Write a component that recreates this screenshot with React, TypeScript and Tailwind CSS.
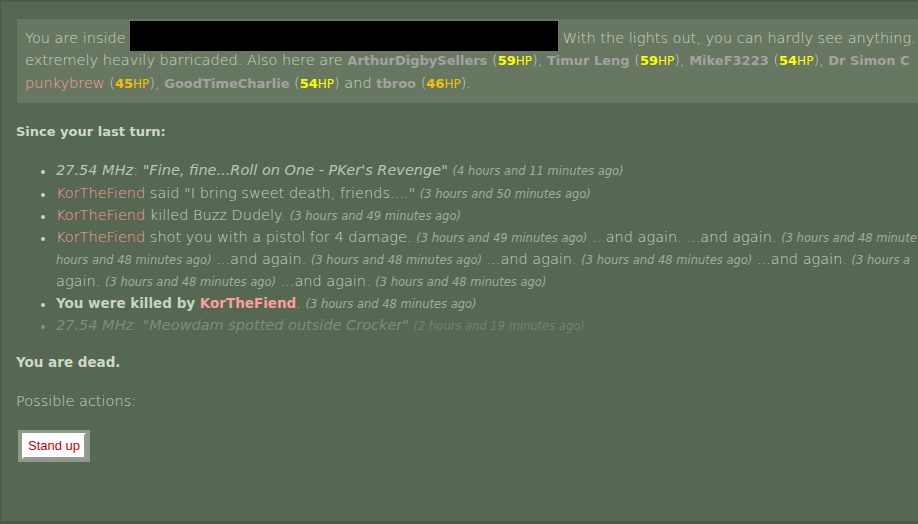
import React from 'react';

const Hp = ({ n, orange }: { n: number; orange?: boolean }) => (
  <span className={orange ? 'text-[#f2c200]' : 'text-[#ffff00]'}>
    <span className="font-bold text-[13px]">{n}</span>
    <span className="text-[12px] leading-none font-normal">HP</span>
  </span>
);

const Name = ({ children }: { children: React.ReactNode }) => (
  <span className="font-bold text-[13px] text-[#a3a3a0]">{children}</span>
);

const Fiend = ({ bold }: { bold?: boolean }) => (
  <span className={`text-[#ff9c9c] ${bold ? 'font-bold' : ''}`}>KorTheFiend</span>
);

const Ago = ({ children }: { children: React.ReactNode }) => (
  <span className="italic font-normal text-[11.5px] leading-none text-[#a2ac9c]">{children}</span>
);

const Em = ({ children }: { children: React.ReactNode }) => (
  <span className="italic font-normal text-[14.5px] text-[#bcc4b5]">{children}</span>
);

export default function App() {
  return (
    <div
      className="w-[918px] h-[524px] overflow-hidden bg-[#566753] text-[14.5px] leading-[22px] text-[#cbd3c4] font-extralight"
      style={{ fontFamily: '"DejaVu Sans", Verdana, sans-serif' }}
    >
      <div className="h-[521px] border-t-2 border-l border-[#4a5a47] pt-[17px] pl-[16px] whitespace-nowrap">
        {/* Location box */}
        <div className="w-[1000px] bg-[#687761] pl-[8px] py-[8px]">
          <div>
            You are inside{' '}
            <span className="inline-block w-[428px] h-[30px] -mb-[8px] -mt-[12px] bg-black align-baseline" />{' '}
            With the lights out, you can hardly see anything. T
          </div>
          <div>
            extremely heavily barricaded. Also here are <Name>ArthurDigbySellers</Name> (<Hp n={59} />),{' '}
            <Name>Timur Leng</Name> (<Hp n={59} />), <Name>MikeF3223</Name> (<Hp n={54} />),{' '}
            <Name>Dr Simon C</Name>
          </div>
          <div>
            <span className="text-[#ff9c9c]">punkybrew</span> (<Hp n={45} orange />), <Name>GoodTimeCharlie</Name> (
            <Hp n={54} />) and <Name>tbroo</Name> (<Hp n={46} orange />).
          </div>
        </div>

        <p className="mt-[18px] font-bold text-[13px] text-[#d0d8c9] -ml-px">Since your last turn:</p>

        <ul className="mt-[16px] pl-[38px] list-disc marker:text-[#cbd3c4] marker:text-[12px]">
          <li className="pl-[1px]">
            <Em>27.54 MHz</Em>: <Em>"Fine, fine...Roll on One - PKer's Revenge"</Em> <Ago>(4 hours and 11 minutes ago)</Ago>
          </li>
          <li className="pl-[1px] mt-px">
            <Fiend /> said "I bring sweet death, friends...." <Ago>(3 hours and 50 minutes ago)</Ago>
          </li>
          <li className="pl-[1px]">
            <Fiend /> killed Buzz Dudely. <Ago>(3 hours and 49 minutes ago)</Ago>
          </li>
          <li className="pl-[1px]">
            <Fiend /> shot you with a pistol for 4 damage. <Ago>(3 hours and 49 minutes ago)</Ago> ...and again.
            ...and again. <Ago>(3 hours and 48 minute</Ago>
            <br />
            <Ago>hours and 48 minutes ago)</Ago> ...and again. <Ago>(3 hours and 48 minutes ago)</Ago> ...and again.{' '}
            <Ago>(3 hours and 48 minutes ago)</Ago> ...and again. <Ago>(3 hours a</Ago>
            <br />
            again. <Ago>(3 hours and 48 minutes ago)</Ago> ...and again. <Ago>(3 hours and 48 minutes ago)</Ago>
          </li>
          <li className="pl-[1px]">
            <span className="font-bold text-[13.5px]">
              You were killed by <Fiend bold />
            </span>
            . <Ago>(3 hours and 48 minutes ago)</Ago>
          </li>
          <li className="pl-[1px] opacity-40">
            <Em>27.54 MHz</Em>: <Em>"Meowdam spotted outside Crocker"</Em> <Ago>(2 hours and 19 minutes ago)</Ago>
          </li>
        </ul>

        <p className="mt-[15px] font-bold text-[13.5px] text-[#d0d8c9] -ml-px">You are dead.</p>
        <p className="mt-[17px] -ml-px">Possible actions:</p>

        <div className="mt-[18px] ml-[1px] inline-flex bg-[#8d9b89] px-[4px] py-[3px]">
          <button
            className="h-[26px] px-[4px] bg-white text-[#cc0000] text-[13px] leading-[20px] font-normal border-2 border-t-white border-l-white border-r-[#9a9a9a] border-b-[#9a9a9a]"
            style={{ fontFamily: '"Liberation Sans", Arial, sans-serif' }}
          >
            Stand up
          </button>
        </div>
      </div>
      <div className="h-[3px] bg-[#4a5a47]" />
    </div>
  );
}
